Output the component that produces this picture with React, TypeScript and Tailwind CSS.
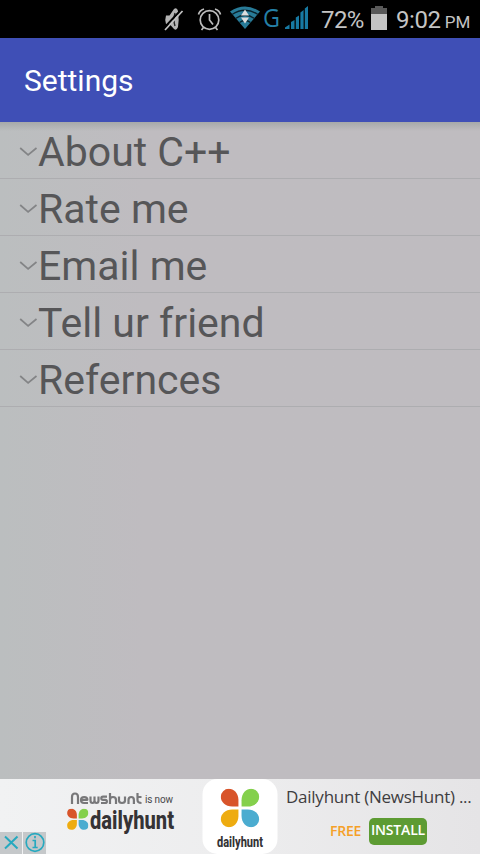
import { clsx } from 'clsx';

const SETTINGS = ['About C++', 'Rate me', 'Email me', 'Tell ur friend', 'Refernces'];

// Four-petal mark, drawn in a 38x38 box
function Petals() {
  return (
    <>
      <path d="M17.500 17.500H11.500C4.500 17.500 .3 13 .3 8A7.800 7.800 0 0 1 8 .3C13 .3 17.500 4.500 17.500 11.500Z" fill="#d8542a" />
      <path d="M20.500 17.500V11.500C20.500 4.500 25 .3 30 .3A7.800 7.800 0 0 1 37.700 8C37.700 13 33.500 17.500 26.500 17.500Z" fill="#84d04c" />
      <path d="M17.500 20.500V26.500C17.500 33.500 13 37.700 8 37.700A7.800 7.800 0 0 1 .3 30C.3 25 4.500 20.500 11.500 20.500Z" fill="#eeac10" />
      <path d="M20.500 20.500H26.500C33.500 20.500 37.700 25 37.700 30A7.800 7.800 0 0 1 30 37.700C25 37.700 20.500 33.500 20.500 26.500Z" fill="#4bacd0" />
    </>
  );
}

function StatusBar() {
  return (
    <div className="flex h-[38px] items-center bg-black pl-[162px] text-[#c4c4c4]">
      <svg className="h-[38px] w-[150px] shrink-0" viewBox="162 0 150 38" fill="none">
        {/* muted speaker */}
        <path d="M166 15.500h3.500L174 9q3-2 4 2 1.300 9 0 16-1.500 4-4 2l-4.500-5H166q-1.500-4 0-8.500Z" fill="#b4b4b4" />
        <path d="M175 13q-2 7 0 13" stroke="#222" strokeWidth="1.400" />
        <path d="M181 10 164 28" stroke="#000" strokeWidth="2" />
        <path d="M182.500 11 165 30" stroke="#c4c4c4" strokeWidth="1.700" />
        {/* alarm clock */}
        <g stroke="#bcbcbc" strokeWidth="1.700">
          <circle cx="209.500" cy="20" r="9.300" />
          <path d="M209.500 14v6l3.500 4.500M198.500 14.500q1-4 5.500-5.500M215 9q4.500 1.500 5.500 5.500M203.500 27.500l-2 2.500M215.500 27.500l2 2.500" />
        </g>
        {/* wifi */}
        <path d="M230 11.500Q245 1.500 260 11.500L245 29Z" fill="#287b98" />
        <path d="M232 14.500Q245 6 258 14.500M235.500 18.500Q245 12 254.500 18.500M239.500 22.500Q245 18.500 250.500 22.500" stroke="#09222c" strokeWidth="1.300" />
        <path d="m245 9.500 4 6h-8ZM245 23.500l-4-6h8Z" fill="#ddd" />
        <text x="263" y="27" fontSize="25.500" fill="#247fa6" className="font-['Open_Sans',sans-serif]" textLength="17" lengthAdjust="spacingAndGlyphs">G</text>
        {/* signal */}
        <g fill="#1779a2">
          <path d="M285 29v-1.500l4.500-3V29ZM291 22l3.500-2v9H291ZM295.800 17.500l3.200-2V29h-3.200ZM300.400 12.500l3.200-2.500v19h-3.200ZM304.800 8.500l3.200-2.500v23h-3.200Z" />
        </g>
      </svg>
      <span className="ml-[9px] w-[50px] pt-px font-[Roboto,sans-serif] text-[24px] leading-none tracking-[-0.6px]">72%</span>
      <svg className="h-[38px] w-4 shrink-0" viewBox="371 0 16 38">
        <path d="M371 8h4V6h8v2h4v6h-16Z" fill="#595959" />
        <path d="M371 14h16v16h-16Z" fill="#c4c4c4" />
      </svg>
      <span className="ml-[9px] pt-[2px] font-[Roboto,sans-serif] text-[24px] leading-none tracking-[-0.4px]">9:02</span>
      <span className="ml-[4px] pt-[6px] font-[Roboto,sans-serif] text-[17px] leading-none">PM</span>
    </div>
  );
}

function SettingRow({ label, first }: { label: string; first: boolean }) {
  return (
    <li
      className={clsx(
        'flex h-[57px] items-center border-b border-[#adadb0] pl-[19px]',
        first && 'bg-linear-to-b from-[#a6a9a9] to-transparent to-[9px]'
      )}
    >
      <svg className="mt-[4px] w-[19px] shrink-0" height="12" viewBox="0 0 19 12" fill="none" stroke="#838486" strokeWidth="1.700">
        <path d="m1.200 2 7.900 7L17.500 2" />
      </svg>
      <span className="pt-[5px] font-[Roboto,sans-serif] text-[41px] leading-none text-[#565658]">{label}</span>
    </li>
  );
}

function AdBanner() {
  return (
    <div className="flex h-[75px] bg-linear-to-r from-[#f1f2f3] via-[#ededee] to-[#e5e4e6]">
      <div className="flex w-[46px] items-end gap-px">
        <span className="h-[22px] w-[22px] bg-[#c5c8ca]">
          <svg viewBox="0 0 22 22" fill="none" stroke="#27a9bf" strokeWidth="2">
            <path d="m5 4.500 12.500 12M17.500 4.500 5 16.500" />
          </svg>
        </span>
        <span className="h-[22px] w-[23px] bg-[#c5c8ca]">
          <svg viewBox="0 0 23 22" fill="none" stroke="#27a9bf" strokeWidth="1.700">
            <circle cx="12" cy="10.500" r="8.800" />
            <path d="M9.500 8.500h2.700v7M9.500 15.500h5.200M12 4v2.300" />
          </svg>
        </span>
      </div>
      <svg className="h-[75px] w-[156px] shrink-0 overflow-visible" viewBox="46 779 156 75">
        {/* rounded wordmark, drawn as single strokes */}
        <g fill="none" stroke="#78787a" strokeWidth="2.200" strokeLinejoin="round" aria-label="Newshunt">
          <path d="M72 804v-7q0-3.500 3-3.500t3 3.500v7M88 803h-4q-3 0-3-3t3.200-3 3.200 2.800H82M90.500 796.500v4q0 2.500 2 2.500t2-2.500v-4M94.500 800.500q0 2.500 2 2.500t2-2.500v-4M107 796.700h-4q-1.700 0-1.700 1.600t1.700 1.600h2.200q1.700 0 1.700 1.600t-1.700 1.500H101M110 793v11M110 800q0-3 3-3t3 3v4M119 796.500v4q0 2.500 3 2.500t3-2.500v-4M128.500 804v-4q0-3 2.700-3t2.700 3v4M137.500 793v7q0 3 4 3M137.500 797h4" />
        </g>
        <text x="145" y="803" fontSize="10" fill="#48484a" className="font-[Roboto,sans-serif]" textLength="28">is now</text>
        <svg x="67" y="808.500" width="21.500" height="21.500" viewBox="0 0 38 38">
          <Petals />
        </svg>
        <text x="90" y="828.500" fontSize="26" fontWeight="800" fill="#353335" className="font-[Roboto,sans-serif]" textLength="84" lengthAdjust="spacingAndGlyphs">dailyhunt</text>
      </svg>
      <svg className="h-[75px] w-[76px] shrink-0 overflow-visible" viewBox="202 779 76 75">
        <rect x="202.500" y="779" width="75" height="75" rx="15" fill="#fff" />
        <svg x="220.500" y="788.500" width="39" height="39" viewBox="0 0 38 38">
          <Petals />
        </svg>
        <text x="217" y="847" fontSize="14.500" fontWeight="800" fill="#353335" className="font-[Roboto,sans-serif]" textLength="46" lengthAdjust="spacingAndGlyphs">dailyhunt</text>
      </svg>
      <div className="flex flex-1 flex-col pt-[8px] pl-[8px] font-['Open_Sans',sans-serif]">
        <p className="text-[17px] leading-[20px] tracking-[-0.25px] whitespace-nowrap text-[#3e3d40]">Dailyhunt (NewsHunt) ...</p>
        <div className="mt-[11px] flex items-center pl-[44px]">
          <span className="w-[39px] pb-px text-[14px] leading-none font-semibold tracking-[-0.2px] text-[#f5a027]">FREE</span>
          <button className="h-[27px] w-[58px] rounded-[5px] bg-[#5d9b33] pb-[3px] text-[14px] leading-none font-semibold tracking-[-0.2px] text-white">INSTALL</button>
        </div>
      </div>
    </div>
  );
}

export default function App() {
  return (
    <div className="flex h-[854px] w-[480px] flex-col overflow-hidden bg-linear-to-r from-[#bbbebf] to-[#bfbcc0] to-30%">
      <StatusBar />
      <header className="flex h-[84px] shrink-0 items-center bg-[#3f4fb6] pt-px pl-6">
        <h1 className="font-[Roboto,sans-serif] text-[30px] leading-none text-white">Settings</h1>
      </header>
      <ul className="flex-1">
        {SETTINGS.map((label, i) => (
          <SettingRow key={label} label={label} first={i === 0} />
        ))}
      </ul>
      <AdBanner />
    </div>
  );
}
